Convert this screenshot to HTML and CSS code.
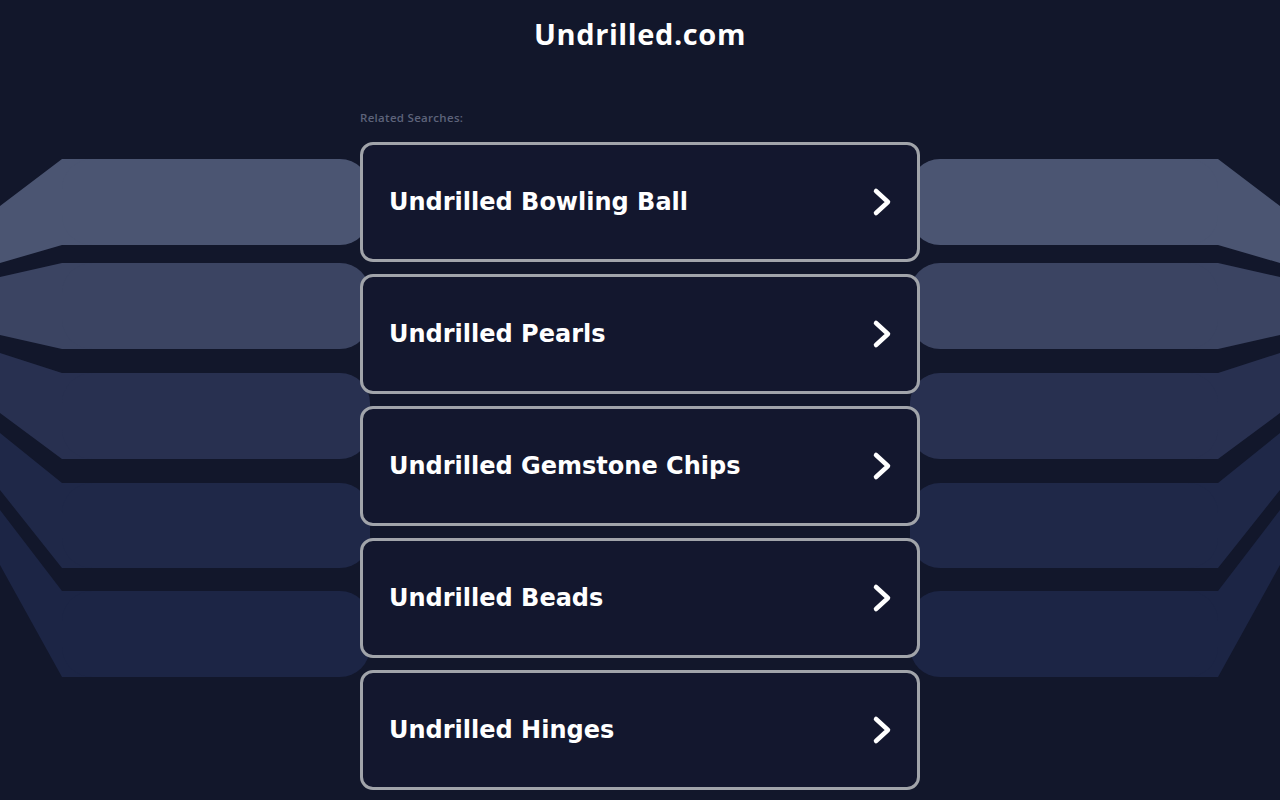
FILE: index.html
```html
<!DOCTYPE html>
<html lang="en">

<head>
  <meta charset="UTF-8" />
  <meta name="viewport" content="width=device-width, initial-scale=1.0" />
  <title>Undrilled.com</title>
  <link rel="stylesheet" href="styles.css">
</head>

<body>
  <!-- decorative band background -->
  <svg class="bg-bands" width="1280" height="800" viewBox="0 0 1280 800" aria-hidden="true">
    <g id="leftBands">
      <path fill="#4b5572" d="M0 206 L62 159 L130 159 L130 245 L62 245 L0 263 Z" />
      <rect fill="#4b5572" x="62" y="159" width="308" height="86" rx="30" />
      <path fill="#3b4462" d="M0 277 L62 263 L130 263 L130 349 L62 349 L0 335 Z" />
      <rect fill="#3b4462" x="62" y="263" width="308" height="86" rx="30" />
      <path fill="#283050" d="M0 353 L62 373 L130 373 L130 459 L62 459 L0 413 Z" />
      <rect fill="#283050" x="62" y="373" width="308" height="86" rx="30" />
      <path fill="#1f2848" d="M0 433 L62 483 L130 483 L130 568 L62 568 L0 490 Z" />
      <rect fill="#1f2848" x="62" y="483" width="308" height="85" rx="30" />
      <path fill="#1c2545" d="M0 510 L62 591 L130 591 L130 677 L62 677 L0 565 Z" />
      <rect fill="#1c2545" x="62" y="591" width="308" height="86" rx="30" />
    </g>
    <use href="#leftBands" transform="translate(1280 0) scale(-1 1)" />
  </svg>

  <div class="page">
    <h1 class="site-title">Undrilled.com</h1>

    <div class="searches">
      <div class="searches-label">Related Searches:</div>
      <div class="search-list" id="searchList"></div>
    </div>
  </div>

  <script>
    const searches = [
      'Undrilled Bowling Ball',
      'Undrilled Pearls',
      'Undrilled Gemstone Chips',
      'Undrilled Beads',
      'Undrilled Hinges'
    ];
    const list = document.getElementById('searchList');

    searches.forEach(term => {
      const a = document.createElement('a');
      a.className = 'search-item';
      a.href = '#';
      a.innerHTML = `
        <span>${term}</span>
        <svg class="chevron" width="24" height="30" viewBox="0 0 24 30">
          <polyline points="6,4 18,15 6,26" fill="none" stroke="#fff" stroke-width="4.5" stroke-linecap="round" stroke-linejoin="round" />
        </svg>
      `;
      list.appendChild(a);
    });
  </script>
</body>

</html>
```

FILE: styles.css
```css
:root {
  --bg-color: #12172b;
  --card-bg: #13172e;
  --card-border: #a1a4aa;
  --label-color: #5d637a;
}

body {
  margin: 0;
  background-color: var(--bg-color);
  color: #ffffff;
  font-family: 'DejaVu Sans', sans-serif;
  overflow: hidden;
}

.bg-bands {
  position: absolute;
  top: 0;
  left: 0;
  z-index: 0;
}

.page {
  position: relative;
  z-index: 1;
  width: 560px;
  margin: 0 auto;
}

.site-title {
  margin: 0;
  padding-top: 15px;
  text-align: center;
  font-family: 'Open Sans', sans-serif;
  font-size: 29px;
  font-weight: 700;
  letter-spacing: 0.6px;
  line-height: 38px;
}

.searches {
  margin-top: 57px;
}

.searches-label {
  font-family: 'Open Sans', sans-serif;
  font-size: 11.5px;
  font-weight: 600;
  letter-spacing: 0.3px;
  color: var(--label-color);
  line-height: 16px;
}

.search-list {
  display: flex;
  flex-direction: column;
  gap: 12px;
  margin-top: 16px;
}

.search-item {
  display: flex;
  justify-content: space-between;
  align-items: center;
  box-sizing: border-box;
  height: 120px;
  padding: 0 23px 0 26px;
  background-color: var(--card-bg);
  border: 3px solid var(--card-border);
  border-radius: 13px;
  color: #ffffff;
  text-decoration: none;
  font-size: 24px;
  font-weight: 700;
}
```
